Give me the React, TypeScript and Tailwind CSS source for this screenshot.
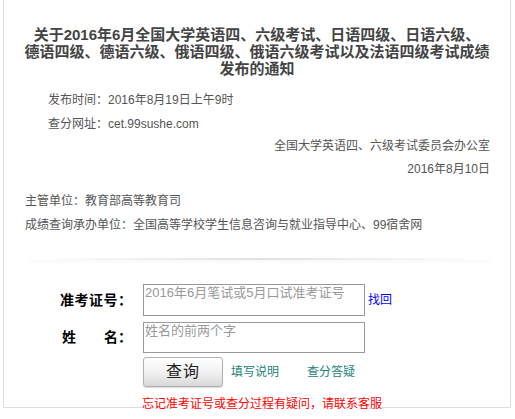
import React from "react";

const font = { fontFamily: '"Liberation Sans", "Noto Sans CJK SC", sans-serif' };

export default function App() {
  return (
    <div className="w-[515px] h-[419px] bg-white overflow-hidden" style={font}>
      <div className="ml-[3px] w-[508px] h-[408px] border-x border-b border-[#dddddd] flex flex-col">
        {/* Title */}
        <div className="pt-[26px] text-center text-[15px] leading-[17px] font-bold text-[#444444]">
          <div>关于2016年6月全国大学英语四、六级考试、日语四级、日语六级、</div>
          <div>德语四级、德语六级、俄语四级、俄语六级考试以及法语四级考试成绩</div>
          <div>发布的通知</div>
        </div>

        {/* Meta */}
        <div className="mt-[11px] text-[12px] text-[#555555]">
          <div className="h-[24px] leading-[24px] pl-[44px]">发布时间：2016年8月19日上午9时</div>
          <div className="h-[24px] leading-[24px] pl-[44px]">查分网址：cet.99sushe.com</div>
          <div className="h-[20px] leading-[20px] text-right pr-[20px]">全国大学英语四、六级考试委员会办公室</div>
          <div className="h-[26px] leading-[26px] text-right pr-[20px]">2016年8月10日</div>
          <div className="mt-[7px] h-[24px] leading-[24px] pl-[21px]">主管单位：教育部高等教育司</div>
          <div className="h-[24px] leading-[24px] pl-[21px]">成绩查询承办单位：全国高等学校学生信息咨询与就业指导中心、99宿舍网</div>
        </div>

        {/* Separator */}
        <div className="mt-[21px] ml-[26px] w-[460px] h-[2px] bg-gradient-to-r from-transparent via-[#dde2e0] to-transparent shadow-[0_2px_3px_rgba(0,0,0,0.04)]" />

        {/* Form */}
        <div className="mt-[24px] flex flex-col">
          <div className="flex items-center">
            <div className="w-[139px] pl-[56px] text-[14px] font-bold text-black tracking-[0.5px]">准考证号：</div>
            <textarea
              readOnly
              placeholder="2016年6月笔试或5月口试准考证号"
              className="w-[222px] h-[32px] resize-none overflow-hidden border border-[#999999] p-0 pl-[1px] text-[13px] leading-[15px] placeholder:text-[#999999] outline-none"
            />
            <span className="ml-[3px] text-[12px] text-[#0000ff]">找回</span>
          </div>
          <div className="mt-[6px] flex items-center">
            <div className="w-[139px] pl-[58px] text-[14px] font-bold text-black flex">
              <span>姓</span>
              <span className="ml-[28px]">名：</span>
            </div>
            <textarea
              readOnly
              placeholder="姓名的前两个字"
              className="w-[222px] h-[31px] resize-none overflow-hidden border border-[#999999] p-0 pl-[1px] text-[13px] leading-[15px] placeholder:text-[#999999] outline-none"
            />
          </div>
          <div className="mt-[4px] flex items-center">
            <div className="w-[139px]" />
            <button className="w-[80px] h-[30px] rounded-[3px] border border-[#b0b0b0] bg-gradient-to-b from-[#ffffff] via-[#f2f2f2] to-[#d8d8d8] shadow-[0_1px_1px_rgba(0,0,0,0.15)] text-[16px] tracking-[1px] text-[#222222]">
              查询
            </button>
            <span className="ml-[8px] text-[12px] text-[#22827a]">填写说明</span>
            <span className="ml-[28px] text-[12px] text-[#22827a]">查分答疑</span>
          </div>
          <div className="mt-[9px] h-[10px] leading-[14px] pl-[138px]">
            <span className="bg-white text-[12px] text-[#ff0000]">忘记准考证号或查分过程有疑问，请联系客服</span>
          </div>
        </div>
      </div>
    </div>
  );
}
